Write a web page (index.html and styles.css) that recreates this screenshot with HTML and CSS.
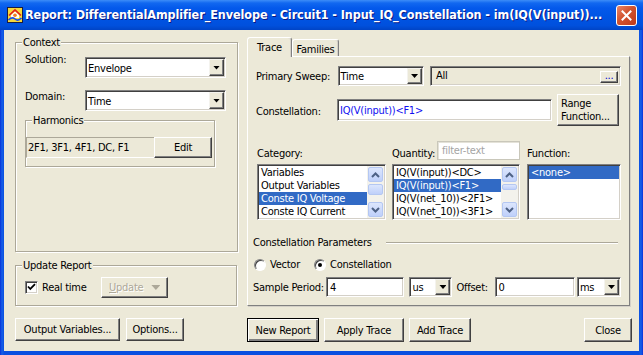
FILE: index.html
```html
<!DOCTYPE html>
<html lang="en">
<head>
  <meta charset="UTF-8" />
  <title>Report</title>
  <link rel="stylesheet" href="styles.css">
</head>
<body>
<div class="window">
  <div class="titlebar">
    <svg class="app-icon" width="16" height="16" viewBox="0 0 16 16">
      <rect x="0.5" y="0.5" width="15" height="15" fill="#F6D83A" stroke="#1c1c40"/>
      <path d="M4 8 L8 4.5 L12 8 L12 11 L4 11Z" fill="#fff"/>
      <path d="M2 8.5 L8 2.8 L14 8.5" fill="none" stroke="#E02020" stroke-width="1.6"/>
      <circle cx="8" cy="8.3" r="1.8" fill="#F08020"/>
      <path d="M1.5 13 Q5 9.5 8 12 T14.5 11" fill="none" stroke="#2050E0" stroke-width="1.6"/>
    </svg>
    <div class="title">Report: DifferentialAmplifier_Envelope - Circuit1 - Input_IQ_Constellation - im(IQ(V(input))...</div>
    <div class="close-btn">
      <svg width="11" height="11" viewBox="0 0 11 11"><path d="M1.5 1.5 L9.5 9.5 M9.5 1.5 L1.5 9.5" stroke="#fff" stroke-width="2" stroke-linecap="square"/></svg>
    </div>
  </div>

  <div class="client">
    <!-- left side: context + update -->
    <div class="left-col">
      <div class="group context">
        <div class="group-title">Context</div>
        <div class="field-row solution-row">
          <span class="field-label">Solution:</span>
          <div class="combo ctx-combo"><span class="combo-text">Envelope</span><span class="combo-btn"><i class="arrow"></i></span></div>
        </div>
        <div class="field-row domain-row">
          <span class="field-label">Domain:</span>
          <div class="combo ctx-combo domain-combo"><span class="combo-text">Time</span><span class="combo-btn"><i class="arrow"></i></span></div>
        </div>
        <div class="group harmonics">
          <div class="group-title">Harmonics</div>
          <div class="harm-row">
            <div class="harm-text">2F1, 3F1, 4F1, DC, F1</div>
            <button class="btn edit-btn">Edit</button>
          </div>
        </div>
      </div>

      <div class="group update">
        <div class="group-title">Update Report</div>
        <div class="update-row">
          <span class="checkbox">
            <svg width="9" height="9" viewBox="0 0 9 9"><polyline points="1,3.5 3.3,6 8,1.2" fill="none" stroke="#000" stroke-width="1.8"/></svg>
          </span>
          <span class="check-label">Real time</span>
          <button class="btn update-btn"><span><u>U</u>pdate</span><i class="arrow"></i></button>
        </div>
      </div>

      <div class="button-row">
        <button class="btn out-btn">Output Variables...</button>
        <button class="btn opt-btn">Options...</button>
      </div>
    </div>

    <!-- right side: trace tab -->
    <div class="right-col">
      <div class="tabs">
        <div class="tab active">Trace</div>
        <div class="tab">Families</div>
      </div>
      <div class="tab-panel">
        <div class="sweep-row">
          <span class="sweep-label">Primary Sweep:</span>
          <div class="combo sweep-combo"><span class="combo-text">Time</span><span class="combo-btn"><i class="arrow"></i></span></div>
          <div class="all-box"><span class="all-text">All</span><span class="dots-btn">...</span></div>
        </div>

        <div class="const-row">
          <span class="const-label">Constellation:</span>
          <div class="textbox const-input">IQ(V(input))&lt;F1&gt;</div>
          <button class="btn range-btn">Range<br>Function...</button>
        </div>

        <div class="lists">
          <div class="list-col cat-col">
            <div class="list-head"><span>Category:</span></div>
            <div class="listbox">
              <div class="list-items">
                <div class="item">Variables</div>
                <div class="item">Output Variables</div>
                <div class="item selected">Conste IQ Voltage</div>
                <div class="item">Conste IQ Current</div>
              </div>
              <div class="scrollbar">
                <span class="sb-btn"><svg width="9" height="6" viewBox="0 0 9 6"><polyline points="1,5 4.5,1.5 8,5" fill="none" stroke="#4D6185" stroke-width="2"/></svg></span>
                <span class="sb-track"><span class="sb-thumb"></span></span>
                <span class="sb-btn"><svg width="9" height="6" viewBox="0 0 9 6"><polyline points="1,1 4.5,4.5 8,1" fill="none" stroke="#4D6185" stroke-width="2"/></svg></span>
              </div>
            </div>
          </div>
          <div class="list-col qty-col">
            <div class="list-head">
              <span class="qty-label">Quantity:</span>
              <div class="filter-box">filter-text</div>
            </div>
            <div class="listbox">
              <div class="list-items">
                <div class="item">IQ(V(input))&lt;DC&gt;</div>
                <div class="item selected">IQ(V(input))&lt;F1&gt;</div>
                <div class="item">IQ(V(net_10))&lt;2F1&gt;</div>
                <div class="item">IQ(V(net_10))&lt;3F1&gt;</div>
              </div>
              <div class="scrollbar">
                <span class="sb-btn"><svg width="9" height="6" viewBox="0 0 9 6"><polyline points="1,5 4.5,1.5 8,5" fill="none" stroke="#4D6185" stroke-width="2"/></svg></span>
                <span class="sb-track"><span class="sb-thumb small"></span></span>
                <span class="sb-btn"><svg width="9" height="6" viewBox="0 0 9 6"><polyline points="1,1 4.5,4.5 8,1" fill="none" stroke="#4D6185" stroke-width="2"/></svg></span>
              </div>
            </div>
          </div>
          <div class="list-col fn-col">
            <div class="list-head"><span>Function:</span></div>
            <div class="listbox">
              <div class="list-items">
                <div class="item selected">&lt;none&gt;</div>
              </div>
            </div>
          </div>
        </div>

        <div class="section-head">
          <span>Constellation Parameters</span>
          <span class="etched-line"></span>
        </div>

        <div class="radio-row">
          <span class="radio"></span><span class="radio-label vector-label">Vector</span>
          <span class="radio checked"></span><span class="radio-label">Constellation</span>
        </div>

        <div class="sample-row">
          <span class="sample-label">Sample Period:</span>
          <div class="textbox sample-input">4</div>
          <div class="combo unit-combo us-combo"><span class="combo-text">us</span><span class="combo-btn"><i class="arrow"></i></span></div>
          <span class="offset-label">Offset:</span>
          <div class="textbox offset-input">0</div>
          <div class="combo unit-combo ms-combo"><span class="combo-text">ms</span><span class="combo-btn"><i class="arrow"></i></span></div>
        </div>
      </div>

      <div class="button-row right-buttons">
        <button class="btn default new-btn">New Report</button>
        <button class="btn apply-btn">Apply Trace</button>
        <button class="btn add-btn">Add Trace</button>
        <button class="btn close-dlg">Close</button>
      </div>
    </div>
  </div>
</div>
</body>
</html>
```

FILE: styles.css
```css
* { box-sizing: border-box; }

body {
  margin: 0;
  background: #fff;
  font-family: "DejaVu Sans Condensed", "Liberation Sans", sans-serif;
  font-size: 11px;
  line-height: 13px;
  letter-spacing: -0.25px;
  color: #000;
  white-space: nowrap;
}

.window {
  width: 643px;
  height: 355px;
  display: flex;
  flex-direction: column;
  background: linear-gradient(to right, #0831D9 0, #1660E8 2px, #0A4FE0 4px, #0A4FE0 639px, #1660E8 641px, #0831D9 643px);
}

/* title bar */
.titlebar {
  height: 30px;
  flex: none;
  display: flex;
  align-items: center;
  padding: 0 6px 0 7px;
  color: #fff;
  background: linear-gradient(to bottom, #3D8DF8 0, #1168F0 3px, #0459EB 8px, #0055E5 50%, #0050DD 85%, #0044C6 100%);
}

.app-icon { flex: none; }

.title {
  flex: 1;
  margin-left: 2px;
  font-weight: bold;
  font-size: 12.5px;
  line-height: 18px;
  letter-spacing: -0.08px;
  overflow: hidden;
  text-shadow: 1px 1px 0 #0A1883;
}

.close-btn {
  flex: none;
  width: 21px;
  height: 21px;
  border: 1px solid #fff;
  border-radius: 3px;
  background: linear-gradient(to bottom right, #E9866A, #D2532F 45%, #C0391B);
  display: flex;
  align-items: center;
  justify-content: center;
}

/* dialog body */
.client {
  flex: 1;
  margin: 0 4px 4px;
  background: #ECE9D8;
  display: flex;
  padding: 7px 0 0 11px;
}

.left-col {
  width: 223px;
  padding-top: 5px;
}

.group {
  border: 1px solid #ACA899;
  box-shadow: inset 1px 1px 0 #fff, 1px 1px 0 #fff;
}

.group-title {
  width: fit-content;
  margin: -7px 0 0 6px;
  padding: 0 1px;
  background: #ECE9D8;
}

.context {
  height: 210px;
}

.field-row {
  display: flex;
  align-items: flex-start;
  padding-left: 9px;
}

.solution-row { margin-top: 4px; }
.domain-row { margin-top: 12px; }

.field-label { width: 60px; }

.ctx-combo {
  width: 141px;
  height: 21px;
  margin-top: 4px;
}
.domain-combo { margin-top: 0; }

/* classic controls */
.combo {
  display: flex;
  background: #fff;
  border: 1px solid;
  border-color: #808080 #fff #fff #808080;
  box-shadow: inset 1px 1px 0 #404040, inset -1px -1px 0 #D4D0C8;
  padding: 1px;
}

.combo-text {
  flex: 1;
  display: flex;
  align-items: center;
  padding-left: 1px;
  padding-top: 1px;
  overflow: hidden;
}

.combo-btn {
  width: 15px;
  flex: none;
  background: #ECE9D8;
  border: 1px solid;
  border-color: #F4F3EE #404040 #404040 #F4F3EE;
  box-shadow: inset -1px -1px 0 #808080;
  display: flex;
  align-items: center;
  justify-content: center;
}

.arrow {
  display: block;
  width: 7px;
  height: 4px;
  background: #000;
  clip-path: polygon(0 0, 100% 0, 50% 100%);
}

.textbox {
  background: #fff;
  border: 1px solid;
  border-color: #808080 #fff #fff #808080;
  box-shadow: inset 1px 1px 0 #404040, inset -1px -1px 0 #D4D0C8;
  padding: 0 3px;
  display: flex;
  align-items: center;
}

.btn {
  font: inherit;
  letter-spacing: inherit;
  color: #000;
  margin: 0;
  padding: 0;
  background: #ECE9D8;
  border: 1px solid;
  border-color: #fff #404040 #404040 #fff;
  box-shadow: inset -1px -1px 0 #808080;
  display: flex;
  align-items: center;
  justify-content: center;
}

.btn.default {
  border-color: #000;
  box-shadow: inset 1px 1px 0 #fff, inset -2px -2px 0 #808080;
}

/* harmonics */
.harmonics {
  width: 190px;
  height: 47px;
  margin: 9px 0 0 9px;
}

.harm-row {
  display: flex;
  height: 21px;
  margin-top: 10px;
}

.harm-text {
  width: 128px;
  border-top: 1px solid #ACA899;
  border-left: 1px solid #ACA899;
  border-bottom: 1px solid #fff;
  padding: 3px 0 0 1px;
}

.edit-btn { width: 58px; }

/* update report */
.update {
  width: 222px;
  height: 41px;
  margin-top: 13px;
}

.update-row {
  display: flex;
  align-items: center;
  height: 21px;
  margin-top: 5px;
  padding-left: 9px;
}

.checkbox {
  width: 13px;
  height: 13px;
  background: #fff;
  border: 1px solid;
  border-color: #808080 #fff #fff #808080;
  box-shadow: inset 1px 1px 0 #404040, inset -1px -1px 0 #D4D0C8;
  display: flex;
  align-items: center;
  justify-content: center;
}

.check-label {
  width: 59px;
  margin-left: 4px;
}

.update-btn {
  width: 67px;
  height: 21px;
  color: #ACA899;
  text-shadow: 1px 1px 0 #fff;
  justify-content: flex-start;
  padding-left: 7px;
}
.update-btn .arrow {
  margin-left: 8px;
  width: 9px;
  height: 5px;
  background: #ACA899;
}

.button-row {
  display: flex;
  margin-top: 12px;
}

.out-btn { width: 105px; height: 23px; }
.opt-btn { width: 58px; height: 23px; margin-left: 6px; }

/* right side */
.right-col {
  width: 385px;
  margin-left: 9px;
  display: flex;
  flex-direction: column;
}

.tabs {
  display: flex;
  align-items: flex-end;
  height: 19px;
}

.tab {
  height: 17px;
  width: 47px;
  padding-top: 3px;
  text-align: center;
  background: #ECE9D8;
  border: 1px solid;
  border-bottom: none;
  border-color: #fff #808080 transparent #fff;
  border-radius: 3px 3px 0 0;
  box-shadow: inset -1px 0 0 #D4D0C8;
}

.tab.active {
  width: 45px;
  height: 20px;
  margin-bottom: -1px;
  position: relative;
  z-index: 1;
}

.tab-panel {
  width: 383px;
  height: 250px;
  border: 1px solid;
  border-color: #fff #808080 #808080 #fff;
  box-shadow: 1px 1px 0 #D4D0C8;
  padding: 9px 8px 0 8px;
}

.sweep-row {
  display: flex;
  align-items: center;
  height: 20px;
}

.sweep-label { width: 82px; padding-top: 1px; }

.sweep-combo { width: 87px; height: 20px; }

.all-box {
  width: 192px;
  height: 20px;
  margin-left: 6px;
  display: flex;
  background: #ECE9D8;
  border: 1px solid;
  border-color: #808080 #fff #fff #808080;
  box-shadow: inset 1px 1px 0 #404040, inset -1px -1px 0 #D4D0C8;
  padding: 1px 2px 2px 5px;
}

.all-text { flex: 1; padding-top: 1px; }

.dots-btn {
  align-self: flex-end;
  width: 18px;
  height: 12px;
  line-height: 7px;
  text-align: center;
  color: #0000D0;
  border: 1px solid;
  border-color: #fff #404040 #404040 #fff;
  box-shadow: inset -1px -1px 0 #808080;
}

.const-row {
  display: flex;
  align-items: center;
  height: 32px;
  margin-top: 8px;
}

.const-label { width: 81px; padding-top: 2px; }

.const-input {
  width: 215px;
  height: 22px;
  color: #1010F0;
  padding-left: 2px;
}

.range-btn {
  width: 62px;
  height: 32px;
  margin-left: 5px;
  justify-content: flex-start;
  text-align: left;
  padding-left: 3px;
}

/* lists */
.lists {
  display: flex;
  margin: 15px 0 0 1px;
}

.cat-col { width: 129px; }
.qty-col { width: 128px; margin-left: 6px; }
.fn-col { width: 94px; margin-left: 7px; }

.list-head {
  height: 19px;
  display: flex;
  align-items: flex-end;
}

.qty-label { width: 46px; }

.filter-box {
  width: 83px;
  height: 19px;
  flex: none;
  color: #A4A4A4;
  background: #fff;
  border: 1px solid #C9C7BA;
  box-shadow: inset 1px 1px 0 #E4E2D8;
  padding: 2px 0 0 4px;
}

.listbox {
  height: 56px;
  margin-top: 4px;
  display: flex;
  background: #fff;
  border: 1px solid;
  border-color: #808080 #fff #fff #808080;
  box-shadow: inset 1px 1px 0 #404040, inset -1px -1px 0 #D4D0C8;
  padding: 1px;
}

.list-items {
  flex: 1;
  overflow: hidden;
}

.item {
  height: 13px;
  padding-left: 2px;
}

.item.selected {
  background: #316AC5;
  color: #fff;
}

.scrollbar {
  width: 17px;
  flex: none;
  display: flex;
  flex-direction: column;
  background: #F3F2EC;
  padding: 1px 1px;
}

.sb-btn,
.sb-thumb {
  display: flex;
  align-items: center;
  justify-content: center;
  border: 1px solid #B4C7F2;
  border-radius: 2px;
  background: linear-gradient(to bottom, #DCE6FD, #BFD0FA);
}

.sb-btn { height: 15px; }

.sb-track {
  flex: 1;
  display: flex;
  flex-direction: column;
}

.sb-thumb {
  height: 11px;
  margin-top: 2px;
}
.sb-thumb.small { height: 6px; }

/* constellation parameters */
.section-head {
  display: flex;
  align-items: center;
  height: 13px;
  margin: 16px 0 0 -3px;
}

.etched-line {
  flex: 1;
  height: 2px;
  margin: 1px 3px 0 14px;
  border-top: 1px solid #ACA899;
  border-bottom: 1px solid #fff;
}

.radio-row {
  display: flex;
  align-items: center;
  height: 13px;
  margin: 9px 0 0 -2px;
}

.radio {
  width: 12px;
  height: 12px;
  flex: none;
  border-radius: 50%;
  background: #fff;
  border: 1px solid;
  border-color: #808080 #fff #fff #808080;
  box-shadow: inset 1px 1px 0 #404040;
  display: flex;
  align-items: center;
  justify-content: center;
}

.radio.checked::after {
  content: "";
  width: 4px;
  height: 4px;
  border-radius: 50%;
  background: #000;
}

.radio-label { margin-left: 4px; }
.vector-label { width: 44px; }

.sample-row {
  display: flex;
  align-items: center;
  height: 20px;
  margin: 6px 0 0 -3px;
}

.sample-label { width: 73px; flex: none; }
.sample-input { width: 80px; height: 20px; }
.unit-combo { height: 20px; }
.us-combo { width: 44px; margin-left: 5px; }
.offset-label { width: 39px; margin-left: 4px; }
.offset-input { width: 82px; height: 20px; }
.ms-combo { width: 45px; margin-left: 2px; }

.right-buttons .btn { height: 24px; }
.new-btn { width: 72px; }
.apply-btn { width: 80px; margin-left: 5px; }
.add-btn { width: 62px; margin-left: 5px; }
.close-dlg { width: 48px; margin-left: auto; }
```
